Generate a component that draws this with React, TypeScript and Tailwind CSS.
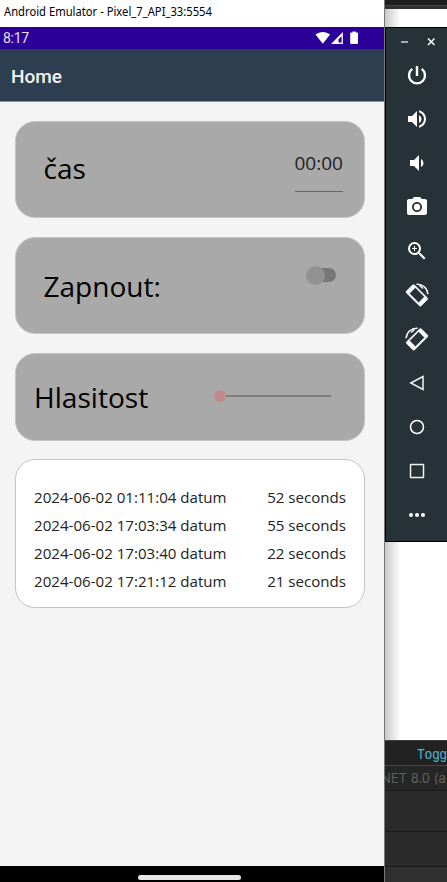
import type { ReactNode } from "react";
import { MdVolumeUp, MdVolumeDown, MdPhotoCamera, MdZoomIn } from "react-icons/md";

const records = [
  { date: "2024-06-02 01:11:04 datum", length: "52 seconds" },
  { date: "2024-06-02 17:03:34 datum", length: "55 seconds" },
  { date: "2024-06-02 17:03:40 datum", length: "22 seconds" },
  { date: "2024-06-02 17:21:12 datum", length: "21 seconds" },
];

function RotateIcon({ flipped = false }: { flipped?: boolean }) {
  return (
    <svg width="24" height="24" viewBox="0 0 24 24" className={flipped ? "-scale-x-100" : ""}>
      <path
        fill="#fff"
        stroke="#fff"
        strokeWidth=".5"
        fillRule="evenodd"
        d="M7.500 1.900a1.400 1.400 0 0 1 2 0L22.300 14.700a1.400 1.400 0 0 1 0 2L16.300 22.700a1.400 1.400 0 0 1-2 0L1.500 9.900a1.400 1.400 0 0 1 0-2zM10.300 4.600L4.400 10.500L13.600 19.700L19.500 13.800z"
      />
      <path fill="none" stroke="#fff" strokeWidth="1.400" d="M11.500 1.300C17.600 .9 22.300 5.200 22.900 11.200M14.500 2.400L18 5.600" />
    </svg>
  );
}

function Card({ className, children }: { className: string; children: ReactNode }) {
  return (
    <section className={`flex justify-between rounded-[20px] border border-[#c4c4c4] ${className}`}>
      {children}
    </section>
  );
}

function Phone() {
  return (
    <div className="flex w-[385px] shrink-0 flex-col border-r border-[#777]">
      <div className="h-[27px] bg-white pl-1 font-['Noto_Sans',sans-serif] text-[12px] leading-[24px] text-black">
        <span className="inline-block origin-left scale-x-[0.935] whitespace-nowrap">Android Emulator - Pixel_7_API_33:5554</span>
      </div>
      <div className="flex h-[22px] items-center justify-between bg-[#2b0098] pl-[3px] pr-[26px] font-[Roboto,sans-serif] text-[14px] tracking-[-0.3px] text-[#e8e0f5]">
        <span className="pt-px">8:17</span>
        <svg width="43" height="14" viewBox="0 0 43 14" fill="#fff">
          <path d="M.5 3.600C5 0 10.700 0 15.100 3.600L7.800 12.800z" />
          <path fillRule="evenodd" d="M27.900 1V12.900H16zM26.600 5.200L23.500 8.200V11.600H26.600z" />
          <path d="M36 1.500h1.500V.5h3.200V1.500h1.500q.8 0 .8.800v9.800q0 1-1 1h-5.800q-1 0-1-1V2.300q0-.8.8-.8z" />
        </svg>
      </div>
      <header className="h-[53px] border-b border-[#8a9098] bg-[#2c3e50] pl-[11px] font-[Roboto,sans-serif] text-[19px] leading-[56px] font-medium text-[#f5f5f5]">
        Home
      </header>
      <main className="flex h-[764px] flex-col bg-[#f4f4f4] pt-[19px] pr-[19px] pl-[14.500px] font-['Open_Sans',sans-serif] text-black">
        <Card className="h-[97px] bg-[#a9a9a9] pr-[21px] pl-[28px]">
          <span className="pt-[27px] text-[28px] leading-[38px]">čas</span>
          <div className="mt-[27px] h-[43px] w-[48.500px] border-b border-[#666] text-[19px] leading-[28px] text-[#222]">
            00:00
          </div>
        </Card>
        <Card className="mt-[19px] h-[97px] bg-[#a9a9a9] pr-[28px] pl-[28px]">
          <span className="pt-[29px] text-[28px] leading-[38px]">Zapnout:</span>
          <div className="mt-[30px] flex h-[14px] w-[26px] items-center rounded-full bg-[#777]">
            <div className="-ml-1 size-[19px] shrink-0 rounded-full bg-[#929292]" />
          </div>
        </Card>
        <Card className="mt-[19px] h-[88px] bg-[#a9a9a9] pr-[33px] pl-[18.500px]">
          <span className="pt-[24px] text-[28.100px] leading-[38px]">Hlasitost</span>
          <div className="mt-[36px] flex h-[12px] w-[117px] items-center">
            <div className="size-[12px] rounded-full bg-[#c18b8b]" />
            <div className="h-[2px] flex-1 bg-[#7e7e7e]" />
          </div>
        </Card>
        <Card className="mt-[18px] h-[149px] flex-col bg-white pt-[23px] pr-[18px] pb-[12px] pl-[18.500px]">
          {records.map((record) => (
            <div key={record.date} className="flex h-[27.700px] shrink-0 justify-between text-[15.100px] leading-[28px] text-[#222]">
              <span>{record.date}</span>
              <span>{record.length}</span>
            </div>
          ))}
        </Card>
      </main>
      <div className="flex h-4 justify-center bg-black pt-[9px] pr-[5px]">
        <div className="h-[5px] w-[103px] rounded-full bg-[#e6e6e6]" />
      </div>
    </div>
  );
}

function EmulatorControls() {
  const controls = [
    <svg width="24" height="24" fill="none" stroke="#fff" strokeWidth="2.400"><path d="M12 3v10M7.300 5.900a8 8 0 1 0 9.400 0" /></svg>,
    <MdVolumeUp size={24} />,
    <MdVolumeDown size={24} />,
    <MdPhotoCamera size={24} />,
    <MdZoomIn size={24} />,
    <RotateIcon />,
    <RotateIcon flipped />,
    <svg width="24" height="24" fill="none" stroke="#f2f2f2" strokeWidth="1.500"><path d="M5.800 12L18 5.500V18.500z" /></svg>,
    <svg width="24" height="24" fill="none" stroke="#fff" strokeWidth="1.500"><circle cx="12" cy="12" r="6.500" /></svg>,
    <svg width="24" height="24" fill="none" stroke="#f2f2f2" strokeWidth="1.500"><rect x="5.500" y="5.500" width="13" height="13" rx=".5" /></svg>,
    <svg width="24" height="24" fill="#fff"><circle cx="6" cy="12" r="2" /><circle cx="12" cy="12" r="2" /><circle cx="18" cy="12" r="2" /></svg>,
  ];
  return (
    <div className="h-[515px] border-y border-l border-black bg-[#263238] text-white">
      <div className="flex h-[25px] items-center pt-[3px] pl-[15px]">
        <svg width="36" height="12" viewBox="0 0 36 12" fill="none" stroke="#fff">
          <path stroke="#a5abae" strokeWidth="2" d="M0 6h7" />
          <path strokeWidth="1.500" d="M27 2.500l6.500 6.500M33.500 2.500l-6.500 6.500" />
        </svg>
      </div>
      <div className="flex w-[62px] flex-col items-center">
        {controls.map((icon, index) => (
          <div key={index} className="flex h-[44px] items-center justify-center">{icon}</div>
        ))}
      </div>
    </div>
  );
}

export default function App() {
  return (
    <div className="flex h-[882px] w-[447px] overflow-hidden bg-white">
      <Phone />
      <div className="w-[62px] overflow-hidden">
        <div className="h-[9px] overflow-hidden border-b border-[#333] bg-[#1e1e1e] pt-[5px]">
          <div className="h-[3px] border-t border-[#444] bg-[#303030]" />
        </div>
        <div className="h-[18px] bg-linear-to-r from-[#c9c9c9] to-white to-25%" />
        <EmulatorControls />
        <div className="h-[198px] bg-linear-to-r from-[#c9c9c9] to-white to-25%" />
        <div className="h-[26px] border-t border-b border-t-[#3c3f3d] border-b-[#454545] bg-[#222] pl-[32px] font-['Liberation_Mono',monospace] text-[14px] leading-[28px] tracking-[-0.4px] text-[#55b5d5]">
          <span className="inline-block origin-left scale-x-[0.93]">Togg</span>
        </div>
        <div className="flex h-[25px] border-b border-[#191919] bg-[#262626] font-[Inter,sans-serif] text-[13px] leading-[25px] whitespace-nowrap text-[#606060]">
          <span className="-ml-[4px]">NET 8.0 (a</span>
        </div>
        <div className="h-[41px] border-b border-[#191919] bg-[#2b2b2b]" />
        <div className="h-[35px] border-b border-[#191919] bg-[#2b2b2b]" />
        <div className="h-[15px] bg-[#303030]" />
      </div>
    </div>
  );
}
